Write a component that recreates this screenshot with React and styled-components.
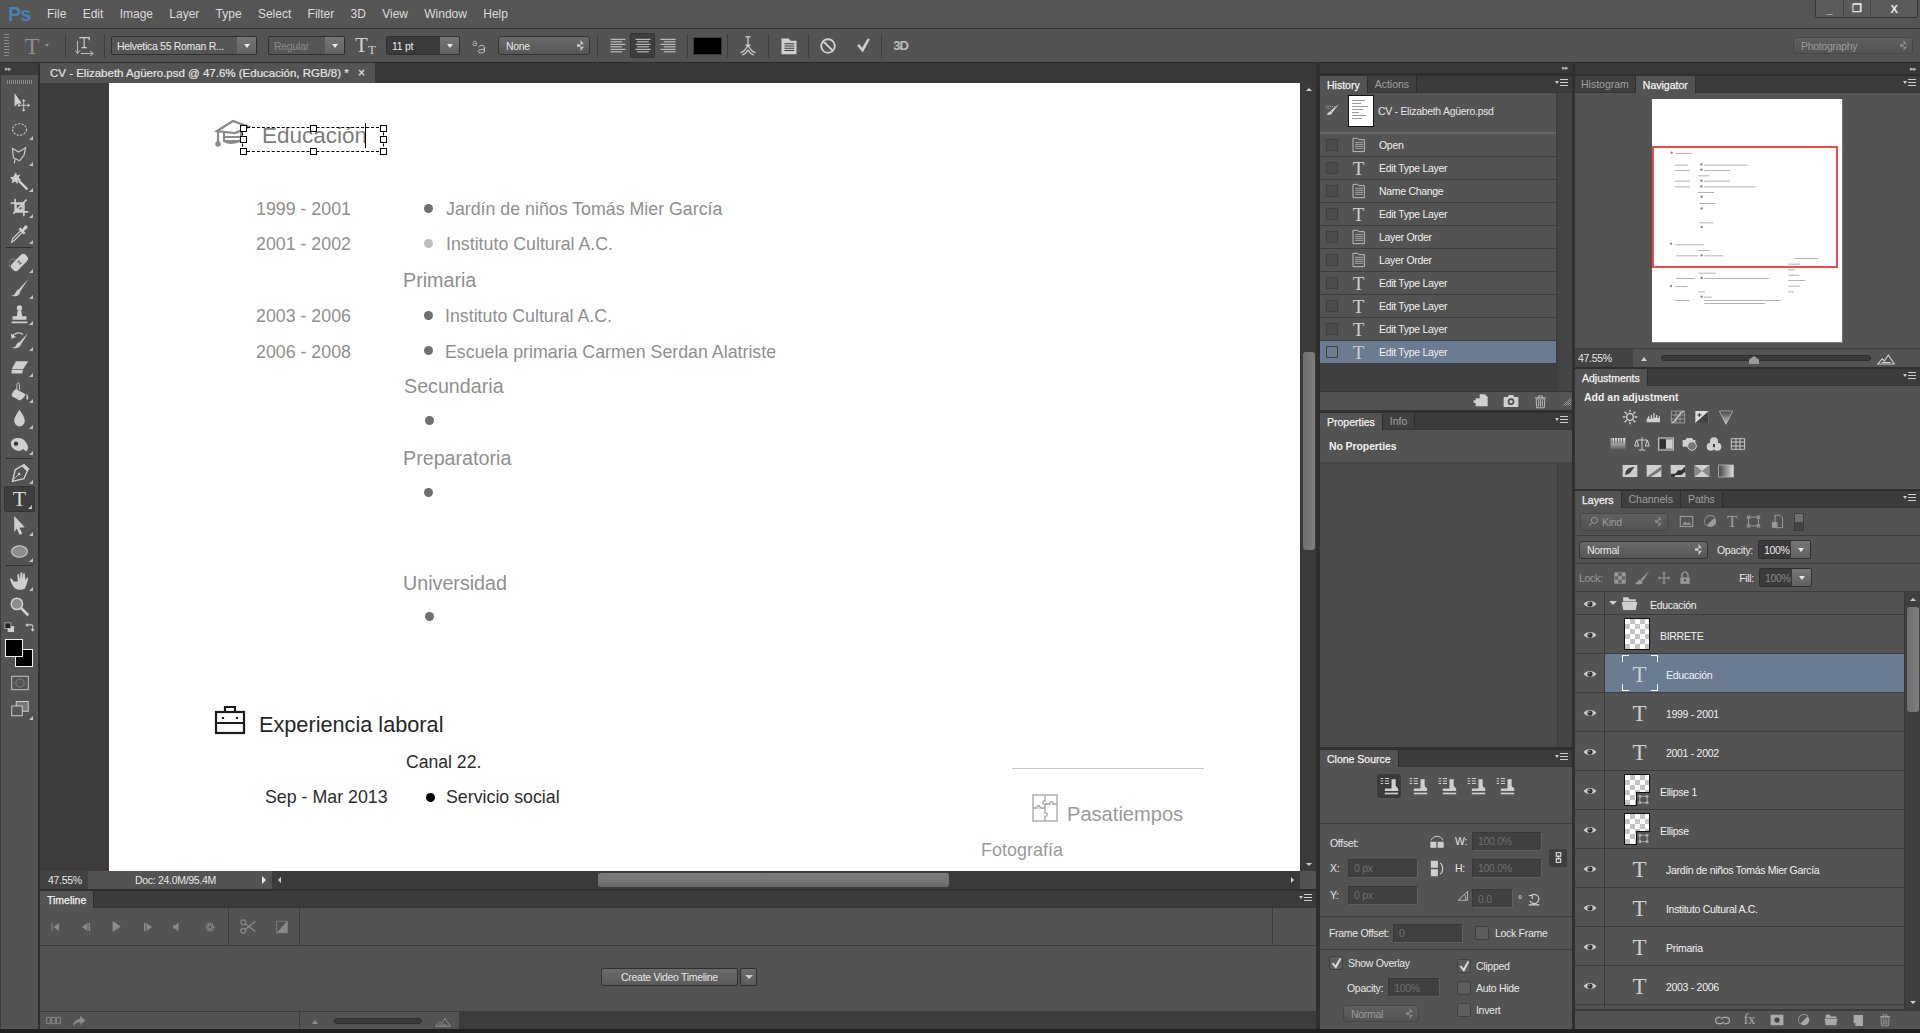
import React from "react";
import styled, { createGlobalStyle, css } from "styled-components";

const GlobalStyle = createGlobalStyle`
  html, body {
    margin: 0;
    height: 100%;
    overflow: hidden;
    background: #1d1d1f;
  }
  * { box-sizing: border-box; }
  body {
    font-family: "Liberation Sans", Arial, sans-serif;
    font-size: 10.5px;
    letter-spacing: -0.3px;
    color: #e6e6e6;
  }
`;

/* ---------- icons ---------- */

const shapes = {
  move: (<><path d="M6 1v15l3.4-3.2 4.6-.3z" /><path d="M16 9v11M10.5 14.500h11" stroke="currentColor" fill="none" /><path d="M16 7.500l2 2.500h-4zM16 21.500l2-2.500h-4zM9 14.500l2.500-2v4zM23 14.500l-2.500-2v4z" /></>),
  marquee: <ellipse cx="12" cy="12" rx="8" ry="6.500" fill="none" stroke="currentColor" strokeWidth="1.200" strokeDasharray="2.500 1.500" />,
  lasso: <path d="M4 4l7 4 8-5-2 9-5 6-7-3.500zM7 16l-1 5" fill="none" stroke="currentColor" strokeWidth="1.300" />,
  wand: (<><path d="M11 11l10 10" stroke="currentColor" strokeWidth="2.600" /><path d="M8 1l1 4 4-1-2 4 3 2-4 1v4l-3-3-4 2 1-4-3-3 4-.5z" /></>),
  crop: <path d="M7 2v15h15M2 7h15v15M20 3L5 19M8 8h7v7H8z" fill="none" stroke="currentColor" strokeWidth="1.800" />,
  dropper: (<><path d="M3 22l1-4L14 8l2 2L6 20z" fill="none" stroke="currentColor" strokeWidth="1.300" /><path d="M13 5l2 2 3-4c2-1.500 4 .5 3 3l-4 3 2 2-2 2-6-6z" /></>),
  heal: (<><rect x="7" y="1" width="10" height="22" rx="4" transform="rotate(45 12 12)" /><circle cx="5" cy="13" r="5" fill="none" stroke="currentColor" strokeDasharray="1 1" /><path d="M10 12l2-2M12 14l2-2" stroke="#555" strokeWidth="1.500" /></>),
  brush: (<><path d="M22 1L11 13l2 2z" /><path d="M11 13c-3 .5-3 4-5 6-1 1-3 1-4 1 4 2 10 1 11-5z" /></>),
  stamp: (<><circle cx="12" cy="4.500" r="3" /><path d="M10 7h4l1 7h5v4H4v-4h5z" /><rect x="3" y="20" width="18" height="2" /></>),
  historyBrush: (<><path d="M3 8c3-5 9-6 13-3" fill="none" stroke="currentColor" strokeWidth="1.500" /><path d="M2 4l1 6 5-2zM22 3L12 14l2 2z" /><path d="M12 14c-3 0-3 3-5 5-1 1-3 1-4 1 4 2 9 1 11-4z" /></>),
  eraser: <path d="M8 6h14l-6 9H3zM3 16h13l-1 4H3z" />,
  bucket: (<><path d="M8 8l11 6c-1 3-4 6-7 7L3 16c0-3 2-6 5-8z" /><path d="M9 9V3c0-2.500 3-2.500 3 0v6" fill="none" stroke="currentColor" /><path d="M20 13c2 2 2 4 2 6-1 2-3 1-2-1z" /></>),
  drop: <path d="M12 2c3 5 6 8 6 13a6 6 0 0 1-12 0c0-5 3-8 6-13z" />,
  smudge: (<><path d="M2 10c1-5 9-7 14-4 3 2 5 5 6 10l-2 4-4-3-3 2c-4 1-11-2-11-9z" /><circle cx="8" cy="11" r="2.500" fill="#3a3a3a" /></>),
  pen: (<><path d="M15 3l6 6-4 9-13 3 3-13z" fill="none" stroke="currentColor" strokeWidth="1.500" /><path d="M17 1l6 6-2 2-6-6zM5 19l6-6" stroke="currentColor" /><circle cx="11.500" cy="12.500" r="1.500" /></>),
  pathSel: <path d="M6 1l12 13-6 .5 3 7-3 1-3-7-3 4z" />,
  ellipse: <ellipse cx="12" cy="12" rx="9" ry="6.500" fill="#8c8c8c" stroke="currentColor" strokeWidth="1.200" />,
  hand: <path d="M5 13c-1-3-3-4-4-3 1 3 3 9 6 11 3 2 9 2 11 0 2-3 3-8 4-12-1-1-2 0-3 3l-1-8c-1-1-2 0-2 1v6l-1-8c-1-1-2 0-2 1l-.500 7-1-6c-1-1-2 0-2 1l.500 7z" />,
  zoom: (<><circle cx="9" cy="9" r="6.500" fill="#8c8c8c" stroke="currentColor" strokeWidth="1.800" /><path d="M14 14l8 8" stroke="currentColor" strokeWidth="3" /></>),
  quick: (<><rect x="1" y="3" width="22" height="18" fill="none" stroke="currentColor" strokeWidth="1.200" /><circle cx="12" cy="12" r="5.500" fill="none" stroke="currentColor" strokeDasharray="1.200 1.200" /></>),
  screens: (<><rect x="7" y="2" width="16" height="13" fill="#777" stroke="currentColor" strokeWidth="1.300" /><rect x="1" y="8" width="14" height="13" fill="#555" stroke="currentColor" strokeWidth="1.300" /></>),
  defaults: (<><rect x="8" y="9" width="14" height="13" /><rect x="2" y="2" width="13" height="12" fill="#222" stroke="currentColor" strokeWidth="1.500" /></>),
  swap: (<><path d="M3 7l5-5v3h8c3 0 4 2 4 4v6h3l-4 6-4-6h3V9c0-1-.500-1.500-2-1.500H8V11z" /></>),
  orient: (<><path d="M5 2h12v3M11 2v12M8 14h6" fill="none" stroke="currentColor" strokeWidth="1.400" /><path d="M3 6v14M0 17l3 4 3-4M7 21h14M18 18l4 3-4 3" fill="none" stroke="currentColor" /></>),
  aa: (<><path d="M3 7c0-3 5-3 5 0v4c-2 1-5 1-5-1s3-2 5-2" fill="none" stroke="currentColor" /><path d="M12 14c0-4 8-4 8 0v7c-3 2-9 2-9-1 0-3 6-3 9-3" fill="none" stroke="currentColor" strokeWidth="1.500" /></>),
  alignL: <path d="M3 4h18M3 7h14M3 10h18M3 13h14M3 16h18M3 19h14" stroke="currentColor" strokeWidth="1.200" fill="none" />,
  alignC: <path d="M3 4h18M5 7h14M3 10h18M5 13h14M3 16h18M5 19h14" stroke="currentColor" strokeWidth="1.200" fill="none" />,
  alignR: <path d="M3 4h18M7 7h14M3 10h18M7 13h14M3 16h18M7 19h14" stroke="currentColor" strokeWidth="1.200" fill="none" />,
  warp: <path d="M9 1h6M12 1v10M9 11h6M3 20c3-1 6-3 9-9 3 6 6 8 9 9M5 23c3-1 5-3 7-6 2 3 4 5 7 6" fill="none" stroke="currentColor" strokeWidth="1.500" />,
  panels: (<><path d="M2 2h10l2 3h8v18H2z" /><path d="M6 9h13M6 12h13M6 15h13M6 18h13" stroke="#333" strokeWidth="1.300" /></>),
  cancel: <path d="M12 3a9 9 0 1 0 .01 0zM6 6l12 12" fill="none" stroke="currentColor" strokeWidth="2.400" />,
  check: <path d="M3 12l3-2 4 5L18 2l3 1-10 19z" />,
  doc: (<><path d="M3 2h7l2 2h8v18H3z" fill="none" stroke="currentColor" strokeWidth="1.300" /><path d="M6 8h12M6 11h12M6 14h12M6 17h12" stroke="currentColor" /></>),
  snapshotBrush: (<><path d="M22 2L9 12l3 3z" /><path d="M9 13c-3 0-3 3-7 5 4 2 9 1 10-3z" /><path d="M2 5l14 1M2 8l6 1" stroke="currentColor" strokeDasharray="2 1" /></>),
  fromState: <path d="M10 2h8l4 4v14H4v-5H1v-4h3V8h6z" />,
  camera: (<><path d="M1 6h6l2-3h6l2 3h6v15H1z" /><circle cx="12" cy="13" r="5" fill="#535353" /><circle cx="12" cy="13" r="2.500" /></>),
  trash: <path d="M3 6h18M9 6V3h6v3M5 8h14l-1 14H6zM9 10v10M12 10v10M15 10v10" fill="none" stroke="currentColor" strokeWidth="1.300" />,
  sun: (<><circle cx="12" cy="12" r="5" fill="none" stroke="currentColor" strokeWidth="2" /><path d="M12 1v4M12 19v4M1 12h4M19 12h4M4 4l3 3M17 17l3 3M20 4l-3 3M7 17l-3 3" stroke="currentColor" strokeWidth="2" /></>),
  levels: <path d="M1 20V14h2v-3h2v4h2V9h2v5h2V6h2v7h2V9h2v5h2v-3h2v9z" />,
  curves: (<><path d="M2 3h20v18H2z M9 3v18M15 3v18M2 9h20M2 15h20" fill="none" stroke="currentColor" strokeWidth=".800" /><path d="M3 20c7 0 10-16 18-16" fill="none" stroke="currentColor" strokeWidth="2" /></>),
  exposure: (<><rect x="2" y="3" width="20" height="18" fill="#ddd" /><path d="M22 3v18H2z" fill="#444" /><path d="M5 9h6M8 6v6M14 16h6" stroke="#333" strokeWidth="1.500" /></>),
  vibrance: (<><defs><linearGradient id="gv" x1="0" y1="0" x2="0" y2="1"><stop offset="0" stopColor="#444" /><stop offset="1" stopColor="#ccc" /></linearGradient></defs><path d="M2 3h20L12 23z" fill="url(#gv)" stroke="#ccc" /></>),
  hue: (<><defs><linearGradient id="gh" x1="0" y1="0" x2="0" y2="1"><stop offset="0" stopColor="#eee" /><stop offset="1" stopColor="#555" /></linearGradient></defs><rect x="1" y="3" width="22" height="18" fill="url(#gh)" /><path d="M3 3v8M7 3v8M11 3v8M15 3v8M19 3v8" stroke="#555" strokeWidth="1.500" /></>),
  balance: <path d="M12 2v18M7 21h10M4 6h16M4 6L1 15h6zM20 6l-3 9h6z" fill="none" stroke="currentColor" strokeWidth="1.500" />,
  bw: (<><rect x="1" y="3" width="22" height="18" fill="none" stroke="currentColor" strokeWidth="1.500" /><rect x="3" y="5" width="9" height="14" fill="#333" /><rect x="12" y="5" width="10" height="14" /></>),
  photoFilter: (<><path d="M1 6h4l2-3h8l2 3h3v10H1z" /><circle cx="15" cy="15" r="6.500" fill="#777" stroke="currentColor" strokeWidth="1.500" /></>),
  mixer: (<><circle cx="12" cy="8" r="6" /><circle cx="7" cy="16" r="6" /><circle cx="17" cy="16" r="6" /><path d="M12 12v5" stroke="#444" strokeWidth="3" /></>),
  lookup: <path d="M2 4h20v16H2zM9 4v16M15 4v16M2 9h20M2 15h20" fill="none" stroke="currentColor" strokeWidth="1.400" />,
  invert: (<><rect x="1" y="3" width="22" height="18" /><path d="M5 18c-1-8 6-12 14-12-4 3-5 11-14 12z" fill="#444" /></>),
  posterize: (<><rect x="1" y="3" width="22" height="18" /><path d="M1 21L23 5v6L7 21z" fill="#777" /></>),
  threshold: (<><rect x="1" y="3" width="22" height="18" /><path d="M1 16h7l4-5h5l6-6v8l-6 5H9l-3 3H1z" fill="#333" /></>),
  selective: (<><rect x="1" y="3" width="22" height="18" /><path d="M1 3l11 9L1 21zM23 3l-11 9 11 9z" fill="#888" /></>),
  gradientMap: (<><defs><linearGradient id="gg"><stop offset="0" stopColor="#444" /><stop offset="1" stopColor="#ddd" /></linearGradient></defs><rect x="1" y="3" width="22" height="18" fill="url(#gg)" stroke="#ccc" /></>),
  search: <path d="M14 3a6.500 6.500 0 1 0 .01 0zM9 14l-6 7" fill="none" stroke="currentColor" strokeWidth="2" />,
  fImage: (<><rect x="2" y="4" width="20" height="16" fill="none" stroke="currentColor" strokeWidth="1.800" /><path d="M5 17l5-5 3 3 3-2 4 4z" /></>),
  fAdjust: <path d="M12 3a9 9 0 1 0 .01 0zM5 19L19 5v-.5A9 9 0 0 0 5 19z" fillRule="evenodd" />,
  fShape: <path d="M4 5h16v14H4zM2 3h4v4H2zM18 3h4v4h-4zM2 17h4v4H2zM18 17h4v4h-4z" fill="none" stroke="currentColor" strokeWidth="1.500" />,
  fSmart: (<><path d="M8 2h8l4 4v16H8z" fill="none" stroke="currentColor" strokeWidth="1.600" /><rect x="3" y="13" width="9" height="9" /></>),
  checker: (<><rect x="3" y="3" width="18" height="18" fill="#666" stroke="currentColor" /><path d="M3 3h6v6H3zM15 3h6v6h-6zM9 9h6v6H9zM3 15h6v6H3zM15 15h6v6h-6z" /></>),
  lockBrush: <path d="M23 1L10 14l3 3zM9 14c-2 .5-2 4-8 6 5 3 12 2 12-2z" />,
  lockMove: <path d="M12 1l3 4h-2v6h6V9l4 3-4 3v-2h-6v6h2l-3 4-3-4h2v-6H5v2l-4-3 4-3v2h6V5H9z" />,
  lock: (<><path d="M7 11V7a5 5 0 0 1 10 0v4" fill="none" stroke="currentColor" strokeWidth="2.200" /><path d="M4 11h16v11H4z" /><circle cx="12" cy="16" r="2" fill="#535353" /></>),
  eye: (<><path d="M1 12c5-7 17-7 22 0-5 7-17 7-22 0z" /><circle cx="12" cy="12" r="4.500" fill="#333" /><circle cx="10.500" cy="10.500" r="1.200" fill="#ccc" /></>),
  folder: (<><path d="M3 6V3h7l2 3h9v3H3z" /><path d="M1 10h22l-2 11H3z" /></>),
  link: <path d="M9 7H6a5 5 0 0 0 0 10h4a5 5 0 0 0 4-3M15 17h3a5 5 0 0 0 0-10h-4a5 5 0 0 0-4 3" fill="none" stroke="currentColor" strokeWidth="2" />,
  mask: (<><rect x="1" y="3" width="22" height="18" /><circle cx="12" cy="12" r="4.500" fill="#444" /></>),
  newLayer: <path d="M5 2h17v20H8v-7l-3 3zM3 12h6v6z" />,
  cloneSrc: (<><path d="M2 3h3M2 6h3M2 9h3M7 3h5M7 6h5M7 9h5" stroke="currentColor" strokeWidth="1.200" /><path d="M15 4h5v8l3 3v3H7v-3h8z" /><path d="M7 20h16v2H7z" /></>),
  angle: <path d="M2 21L18 6v15zM13 11c2 2 2 6 2 10" fill="none" stroke="currentColor" strokeWidth="1.300" />,
  flipH: (<><path d="M2 13h9v9H2zM13 13h9v9h-9z" /><path d="M3 11c3-8 15-8 18 0" fill="none" stroke="currentColor" strokeWidth="1.500" /></>),
  flipV: (<><path d="M4 1h10v10H4zM4 13h10v10H4z" /><path d="M17 4c5 3 5 13 0 16" fill="none" stroke="currentColor" strokeWidth="1.500" /></>),
  reset: <path d="M7 6a8 8 0 1 1-2 9M3 6h6v6M3 22h18" fill="none" stroke="currentColor" strokeWidth="2" />,
  chain: <path d="M8 3h8v7H8zM8 14h8v7H8zM12 8v8" fill="none" stroke="currentColor" strokeWidth="2.400" />,
  first: <path d="M5 4h2v16H5zM20 4v16L9 12z" />,
  prev: <path d="M15 4v16L4 12zM17 4h3v16h-3z" />,
  play: <path d="M5 2v20l15-10z" />,
  next: <path d="M4 4h3v16H4zM9 4v16l11-8z" />,
  mute: <path d="M15 3v18l-7-6H4V9h4z" />,
  gear: (<><circle cx="12" cy="12" r="7" fill="none" stroke="currentColor" strokeWidth="3.500" strokeDasharray="3 1.500" /><circle cx="12" cy="12" r="4" fill="none" stroke="currentColor" strokeWidth="2" /></>),
  scissors: (<><circle cx="6" cy="6" r="3.500" fill="none" stroke="currentColor" strokeWidth="1.800" /><circle cx="6" cy="18" r="3.500" fill="none" stroke="currentColor" strokeWidth="1.800" /><path d="M9 8l14 11M9 16L23 5" stroke="currentColor" strokeWidth="1.800" /></>),
  transition: (<><rect x="3" y="2" width="18" height="20" fill="none" stroke="currentColor" strokeWidth="1.200" /><path d="M21 2v20H3z" /></>),
  frames: <path d="M1 7h6v10H1zM9 7h6v10H9zM17 7h6v10h-6z" fill="none" stroke="currentColor" strokeWidth="1.500" />,
  share: <path d="M14 3l9 8-9 8v-5c-5 0-9 2-12 7 0-7 5-12 12-13z" />,
  mountainS: <path d="M6 18l6-8 6 8z" />,
  mountainL: <path d="M1 20l6-7 3 3 5-8 8 12zM6 18h12" fill="none" stroke="currentColor" strokeWidth="1.500" />,
};

const Glyph = styled.svg.attrs({ viewBox: "0 0 24 24" })`
  width: ${(p) => p.$size || 16}px;
  height: ${(p) => p.$size || 16}px;
  flex: none;
  fill: currentColor;
  color: ${(p) => p.$color || "#cfcfcf"};
  display: block;
`;

const Icon = ({ name, size, color }) => (
  <Glyph $size={size} $color={color}>
    {shapes[name]}
  </Glyph>
);

/* ---------- shared bits ---------- */

const Frame = styled.div`
  width: 1920px;
  height: 1033px;
  display: flex;
  flex-direction: column;
  background: #535353;
  overflow: hidden;
`;

const SelectShell = styled.div`
  display: flex;
  align-items: center;
  height: ${(p) => p.$h || 18}px;
  width: ${(p) => p.$w}px;
  flex: none;
  border: 1px solid #333;
  border-radius: 3px;
  padding: 0 5px 0 7px;
  background: linear-gradient(#6a6a6a, #565656);
  color: ${(p) => (p.$off ? "#9a9a9a" : "#e8e8e8")};
  ${(p) =>
    p.$ghost &&
    css`
      border-color: #474747;
      background: linear-gradient(#5f5f5f, #535353);
    `}
`;

const Updown = styled.span`
  margin-left: auto;
  width: 7px;
  height: 11px;
  background: currentColor;
  opacity: 0.8;
  clip-path: polygon(50% 0, 100% 38%, 0 38%, 0 62%, 100% 62%, 50% 100%);
`;

const Select = ({ w, h, off, ghost, children }) => (
  <SelectShell $w={w} $h={h} $off={off} $ghost={ghost}>
    {children}
    <Updown />
  </SelectShell>
);

const Combo = styled.div`
  display: flex;
  width: ${(p) => p.$w}px;
  height: ${(p) => p.$h || 19}px;
  flex: none;
  border: 1px solid #2f2f2f;
  border-radius: 2px;
  overflow: hidden;
`;

const ComboText = styled.div`
  flex: 1;
  display: flex;
  align-items: center;
  padding-left: ${(p) => p.$pad || 5}px;
  background: ${(p) => (p.$light ? "#555" : "#3a3a3a")};
  color: ${(p) => (p.$off ? "#8a8a8a" : "#eaeaea")};
`;

const ComboArrow = styled.div`
  width: ${(p) => p.$w || 19}px;
  display: flex;
  align-items: center;
  justify-content: center;
  background: linear-gradient(#767676, #616161);
  &::after {
    content: "";
    border: 3.500px solid transparent;
    border-top: 4px solid #e8e8e8;
    border-bottom: 0;
  }
`;

const Field = styled.div`
  display: flex;
  align-items: center;
  height: ${(p) => p.$h || 19}px;
  width: ${(p) => p.$w || 70}px;
  padding-left: 5px;
  background: #404040;
  border: 1px solid #383838;
  border-bottom-color: #5f5f5f;
  border-right-color: #5f5f5f;
  color: #707070;
`;

const Check = styled.span`
  width: 14px;
  height: 14px;
  flex: none;
  display: flex;
  align-items: center;
  justify-content: center;
  background: #5c5c5c;
  border: 1px solid #3f3f3f;
  border-radius: 2px;
`;

const Panel = styled.section`
  display: flex;
  flex-direction: column;
  height: ${(p) => p.$h}px;
  flex: none;
  background: #535353;
  overflow: hidden;
`;

const TabStrip = styled.div`
  display: flex;
  height: 18px;
  flex: none;
  background: #3b3b3b;
  border-top: 1px solid #2e2e2e;
  border-bottom: 1px solid #353535;
`;

const Tab = styled.div`
  display: flex;
  align-items: center;
  padding: 0 ${(p) => p.$pad || 7}px;
  height: ${(p) => (p.$on ? "17px" : "16px")};
  letter-spacing: 0;
  background: ${(p) => (p.$on ? "#535353" : "#3f3f3f")};
  color: ${(p) => (p.$on ? "#f2f2f2" : "#a0a0a0")};
  -webkit-text-stroke: ${(p) => (p.$on ? "0.25px #f2f2f2" : "0")};
  border-right: 1px solid #2e2e2e;
  z-index: 1;
`;

const MenuLines = styled.div`
  margin-left: auto;
  margin: 3px 4px 0 auto;
  width: 13px;
  height: 9px;
  position: relative;
  background: repeating-linear-gradient(#ccc 0 1px, transparent 1px 3px) right / 8px 100% no-repeat;
  &::before {
    content: "";
    position: absolute;
    left: 0;
    top: 2px;
    border: 2.500px solid transparent;
    border-top: 3px solid #ccc;
  }
`;

const Collapse = styled.div`
  height: ${(p) => p.$h || 12}px;
  flex: none;
  display: flex;
  align-items: center;
  justify-content: ${(p) => (p.$left ? "flex-start" : "flex-end")};
  padding: 0 4px;
  background: ${(p) => (p.$left ? "#3c3c3c" : "#383838")};
  color: #b5b5b5;
  font-size: 7px;
  letter-spacing: -1px;
`;

const CornerGrip = styled.span`
  width: 9px;
  height: 9px;
  flex: none;
  background: repeating-conic-gradient(#9a9a9a 0 25%, transparent 0 50%) 0 0 / 2px 2px;
  clip-path: polygon(100% 0, 100% 100%, 0 100%);
`;

const Grow = styled.div`
  flex: 1;
`;

const T = styled.span`
  font-family: "Liberation Serif", serif;
  font-size: ${(p) => p.$size || 20}px;
  line-height: 1;
  letter-spacing: 0;
  color: ${(p) => p.$color || "#cfcfcf"};
  flex: none;
`;

/* ---------- title and options bar ---------- */

const TitleBar = styled.header`
  height: 29px;
  flex: none;
  display: flex;
  align-items: flex-start;
  background: #555;
  border-bottom: 1px solid #2d2d2d;
  padding-left: 8px;
`;

const PsLogo = styled.div`
  width: 39px;
  font-size: 19.500px;
  line-height: 28px;
  font-weight: 700;
  color: #4a82b8;
  letter-spacing: -0.600px;
`;

const Menu = styled.nav`
  display: flex;
  gap: 16.300px;
  font-size: 12px;
  line-height: 28px;
  letter-spacing: 0;
  color: #dcdcdc;
`;

const WinButtons = styled.div`
  margin-left: auto;
  margin-right: 2px;
  display: flex;
  width: 103px;
  height: 18px;
  background: #5a5a5a;
  border: 1px solid #333;
  border-top: 0;
  border-radius: 0 0 2px 2px;
`;

const WinButton = styled.div`
  width: ${(p) => p.$w}px;
  display: flex;
  align-items: center;
  justify-content: center;
  font-size: 11px;
  font-weight: 700;
  color: #eee;
  border-right: ${(p) => (p.$last ? 0 : "1px solid #444")};
`;

const OptionsBar = styled.div`
  height: 34px;
  flex: none;
  display: flex;
  align-items: center;
  background: #535353;
  border-bottom: 1px solid #2d2d2d;
  padding: 0 7px 0 4px;
`;

const Grip = styled.div`
  width: ${(p) => p.$w || 5}px;
  height: ${(p) => p.$h || 24}px;
  flex: none;
  background: repeating-linear-gradient(#8a8a8a 0 1px, transparent 1px 3px);
`;

const Slot = styled.div`
  width: ${(p) => p.$w}px;
  height: 25px;
  flex: none;
  display: flex;
  align-items: center;
  justify-content: center;
  gap: ${(p) => p.$gap ?? 6}px;
  border-radius: 2px;
  ${(p) =>
    p.$on &&
    css`
      background: #3e3e3e;
      border: 1px solid #343434;
    `}
`;

const SizeGlyph = styled.div`
  display: flex;
  align-items: flex-end;
`;

const Sep = styled.div`
  width: 1px;
  height: 24px;
  flex: none;
  background: #3e3e3e;
  margin: 0 ${(p) => p.$r || 0}px 0 ${(p) => p.$l || 0}px;
`;

const MiniArrow = styled.span`
  border: 2.500px solid transparent;
  border-top: 3px solid #8d8d8d;
  border-bottom: 0;
`;

const Swatch = styled.div`
  width: 29px;
  height: 18px;
  flex: none;
  background: #000;
  border: 1px solid #3a3a3a;
`;

const ThreeD = styled.span`
  font-size: 13px;
  font-weight: 700;
  color: #bdbdbd;
  letter-spacing: -1px;
`;

/* ---------- tools ---------- */

const Workspace = styled.div`
  flex: 1;
  min-height: 0;
  display: flex;
`;

const Toolbox = styled.aside`
  width: 40px;
  flex: none;
  display: flex;
  flex-direction: column;
  background: #535353;
  border-left: 1px solid #3a3a3a;
  border-right: 2px solid #2f2f2f;
`;

const ToolGrip = styled.div`
  height: 10px;
  margin: 2px 6px 3px;
  flex: none;
  background: repeating-linear-gradient(90deg, #8a8a8a 0 1px, transparent 1px 2px) center / 100% 4px no-repeat;
`;

const Tool = styled.div`
  height: 26px;
  flex: none;
  margin: 0 3px 0 3px;
  display: flex;
  align-items: center;
  justify-content: center;
  position: relative;
  border-radius: 2px;
  ${(p) =>
    p.$on &&
    css`
      background: #3e3e3e;
      border: 1px solid #343434;
    `}
  ${(p) =>
    p.$more &&
    css`
      &::after {
        content: "";
        position: absolute;
        right: 2px;
        bottom: 2px;
        border: 2px solid transparent;
        border-right-color: #c2c2c2;
        border-bottom-color: #c2c2c2;
      }
    `}
`;

const ToolRule = styled.div`
  height: 1px;
  flex: none;
  margin: 1px 5px 1px;
  background: #303030;
`;

const SwapRow = styled.div`
  height: 14px;
  flex: none;
  margin: 1px 3px 5px 3px;
  display: flex;
  align-items: center;
  justify-content: space-between;
`;

const ColorWell = styled.div`
  height: 30px;
  flex: none;
  position: relative;
  margin: 0 0 1px 4px;
`;

const Chip = styled.div`
  position: absolute;
  width: 18px;
  height: 18px;
  left: ${(p) => (p.$back ? 10 : 0)}px;
  top: ${(p) => (p.$back ? 10 : 0)}px;
  background: #000;
  border: 1px solid #eee;
`;

const toolColumn = [
  ["move"], ["marquee", 1], ["lasso", 1], ["wand", 1], ["crop", 1], ["dropper", 1], "-",
  ["heal", 1], ["brush", 1], ["stamp", 1], ["historyBrush", 1], ["eraser", 1], ["bucket", 1], ["drop", 1], ["smudge", 1], "-",
  ["pen", 1], ["type", 1], ["pathSel", 1], ["ellipse", 1], "-",
  ["hand", 1], ["zoom"],
];

const ToolColumn = () => (
  <Toolbox>
    <Collapse $left>▸▸</Collapse>
    <ToolGrip />
    {toolColumn.map((t, i) =>
      t === "-" ? (
        <ToolRule key={i} />
      ) : t[0] === "type" ? (
        <Tool key={i} $on $more>
          <T $size={22} $color="#dcdcdc">T</T>
        </Tool>
      ) : (
        <Tool key={i} $more={t[1]}>
          <Icon name={t[0]} size={t[0] === "move" ? 22 : 21} />
        </Tool>
      )
    )}
    <SwapRow>
      <Icon name="defaults" size={11} />
      <Icon name="swap" size={11} />
    </SwapRow>
    <ColorWell>
      <Chip $back />
      <Chip />
    </ColorWell>
    <Tool>
      <Icon name="quick" size={18} />
    </Tool>
    <Tool $more>
      <Icon name="screens" size={18} />
    </Tool>
  </Toolbox>
);

/* ---------- document ---------- */

const Center = styled.main`
  width: 1276px;
  flex: none;
  display: flex;
  flex-direction: column;
`;

const DocTabs = styled.div`
  height: 20px;
  flex: none;
  display: flex;
  background: #383838;
`;

const DocTab = styled.div`
  width: 335px;
  display: flex;
  align-items: center;
  padding-left: 10px;
  background: #535353;
  font-size: 11.500px;
  letter-spacing: 0;
  -webkit-text-stroke: 0.2px #e4e4e4;
  color: #e4e4e4;
  white-space: nowrap;
`;

const DocClose = styled.span`
  margin-left: auto;
  margin-right: 10px;
  font-size: 12px;
`;

const CanvasRow = styled.div`
  height: 788px;
  flex: none;
  display: flex;
  background: #3d3c3b;
  padding-left: 69px;
`;

const Page = styled.div`
  width: 1191px;
  flex: none;
  position: relative;
  background: #fff;
  overflow: hidden;
`;

const placed = css`
  position: absolute;
  left: ${(p) => p.$x - 109}px;
  top: ${(p) => p.$y - 83}px;
`;

const DocText = styled.div`
  ${placed}
  transform: translateY(calc(-50% + 1px));
  white-space: nowrap;
  font-size: ${(p) => p.$size || 17.800}px;
  line-height: 1.2;
  letter-spacing: 0;
  color: ${(p) => p.$color || "#8f8f8f"};
  font-family: "Liberation Sans", Arial, sans-serif;
`;

const Dot = styled.div`
  ${placed}
  width: 9px;
  height: 9px;
  margin: -4.500px 0 0 -4.500px;
  border-radius: 50%;
  background: ${(p) => p.$color || "#6f6f6f"};
`;

const DocGraphic = styled.svg`
  ${placed}
  width: ${(p) => p.$w}px;
  height: ${(p) => p.$h}px;
`;

const Rule = styled.div`
  ${placed}
  width: 192px;
  height: 1px;
  background: #c9c9c9;
`;

const TextBox = styled.div`
  ${placed}
  width: 142px;
  height: 25px;
  border: 1px dashed #000;
`;

const Handle = styled.span`
  position: absolute;
  left: ${(p) => p.$l}%;
  top: ${(p) => p.$t}%;
  width: 7px;
  height: 7px;
  margin: -3.500px 0 0 -3.500px;
  background: #fff;
  border: 1px solid #000;
`;

const Caret = styled.div`
  ${placed}
  width: 1px;
  height: 25px;
  background: #000;
`;

const handleSpots = [
  [0, 0], [50, 0], [100, 0], [0, 50], [100, 50], [0, 100], [50, 100], [100, 100],
];

const grayRows = [
  ["1999 - 2001", 256, 209],
  ["2001 - 2002", 256, 244],
  ["2003 - 2006", 256, 316],
  ["2006 - 2008", 256, 352],
  ["Jardín de niños Tomás Mier García", 446, 209],
  ["Instituto Cultural A.C.", 446, 244],
  ["Instituto Cultural A.C.", 445, 316],
  ["Escuela primaria Carmen Serdan Alatriste", 445, 352],
  ["Primaria", 403, 280, 19.700],
  ["Secundaria", 404, 386, 19.700],
  ["Preparatoria", 403, 458, 19.700],
  ["Universidad", 403, 583, 19.700],
];

const DocPage = () => (
  <Page>
    <DocGraphic $x={215} $y={119} $w={36} $h={28} viewBox="0 0 36 28" fill="none" stroke="#8a8a8a" strokeWidth="2.200">
      <path d="M2 12L18 2l16 6-14 6z" />
      <path d="M3 25V12" />
      <circle cx="3" cy="25" r="1.700" fill="#8a8a8a" />
      <path d="M9 13v9c5 3 13 2 17-1v-10M9 18h18M9 22h17" />
    </DocGraphic>
    <DocText $x={262} $y={134} $size={22.500} $color="#7d7d7d">Educación</DocText>
    <TextBox $x={242} $y={127}>
      {handleSpots.map(([l, t]) => (
        <Handle key={`${l}-${t}`} $l={l} $t={t} />
      ))}
    </TextBox>
    <Caret $x={365} $y={123} />
    {grayRows.map(([label, x, y, size]) => (
      <DocText key={`${label}-${y}`} $x={x} $y={y} $size={size}>{label}</DocText>
    ))}
    <Dot $x={428} $y={208} />
    <Dot $x={428} $y={243} $color="#bdbdbd" />
    <Dot $x={428} $y={315} />
    <Dot $x={428} $y={350} />
    <Dot $x={429} $y={420} />
    <Dot $x={428} $y={492} />
    <Dot $x={429} $y={616} />
    <DocGraphic $x={214} $y={705} $w={32} $h={30} viewBox="0 0 32 30" fill="none" stroke="#1c1c1c" strokeWidth="2.200">
      <rect x="2" y="7" width="28" height="21" />
      <path d="M11 7V2h10v5M2 18h28" />
      <path d="M9 12v2M23 12v2" />
    </DocGraphic>
    <DocText $x={259} $y={724} $size={21.700} $color="#262626">Experiencia laboral</DocText>
    <DocText $x={406} $y={762} $size={17.600} $color="#2c2c2c">Canal 22.</DocText>
    <DocText $x={265} $y={797} $color="#2c2c2c">Sep - Mar 2013</DocText>
    <Dot $x={430} $y={797} $color="#000" />
    <DocText $x={446} $y={797} $color="#2c2c2c">Servicio social</DocText>
    <Rule $x={1012} $y={768} />
    <DocGraphic $x={1032} $y={794} $w={26} $h={28} viewBox="0 0 26 28" fill="none" stroke="#a5a5a5" strokeWidth="1.300">
      <rect x="1" y="1" width="24" height="26" />
      <path d="M13 1v6c-3-1-3 4 0 3v4H8c1-3-4-3-3 0H1M13 14v5c3-1 3 4 0 3v5M13 10h5c-1-3 4-3 3 0h4" />
    </DocGraphic>
    <DocText $x={1067} $y={813} $size={20.100} $color="#9a9a9a">Pasatiempos</DocText>
    <DocText $x={981} $y={850} $size={18} $color="#9a9a9a">Fotografía</DocText>
  </Page>
);

const ScrollV = styled.div`
  width: 16px;
  flex: none;
  display: flex;
  flex-direction: column;
  align-items: center;
  background: #3a3a3a;
  border-left: 1px solid #333;
`;

const Triangle = styled.span`
  flex: none;
  width: 0;
  height: 0;
  margin: ${(p) => p.$m || "0"};
  border: ${(p) => p.$s || 3}px solid transparent;
  ${(p) => `border-${{ up: "bottom", down: "top", left: "right", right: "left" }[p.$dir]}-color: ${p.$color || "#d0d0d0"};`}
  ${(p) => `border-${{ up: "top", down: "bottom", left: "left", right: "right" }[p.$dir]}-width: 0;`}
`;

const Thumb = styled.div`
  width: ${(p) => p.$w || 12}px;
  height: ${(p) => p.$h}px;
  flex: none;
  margin-top: ${(p) => p.$mt || 0}px;
  margin-left: ${(p) => p.$ml || 0}px;
  border-radius: 3px;
  background: linear-gradient(90deg, #6e6e6e, #7e7e7e);
`;

const HThumb = styled(Thumb)`
  background: linear-gradient(#7e7e7e, #6a6a6a);
`;

const StatusBar = styled.div`
  height: 18px;
  flex: none;
  display: flex;
  background: #3a3a3a;
`;

const StatusZoom = styled.div`
  width: 48px;
  display: flex;
  align-items: center;
  padding-left: 8px;
  background: #424242;
`;

const StatusDoc = styled.div`
  width: 184px;
  display: flex;
  align-items: center;
  padding-left: 47px;
  background: #535353;
`;

const HTrack = styled.div`
  flex: 1;
  display: flex;
  align-items: center;
  padding: 0 6px 0 6px;
`;

const StatusEnd = styled.div`
  width: 16px;
  background: #535353;
`;

const Timeline = styled.section`
  flex: 1;
  display: flex;
  flex-direction: column;
  background: #535353;
  border-top: 1px solid #2c2c2c;
`;

const TransportRow = styled.div`
  height: 38px;
  flex: none;
  display: flex;
  align-items: stretch;
  border-bottom: 1px solid #3c3c3c;
`;

const Transport = styled.div`
  width: ${(p) => p.$w}px;
  flex: none;
  display: flex;
  align-items: center;
  justify-content: center;
  border-right: ${(p) => (p.$edge ? "1px solid #3c3c3c" : "0")};
`;

const TimelineBody = styled.div`
  flex: 1;
  display: flex;
  align-items: center;
  justify-content: center;
  padding: 0 0 4px 2px;
  gap: 2px;
`;

const PlainButton = styled.div`
  width: ${(p) => p.$w}px;
  height: 18px;
  display: flex;
  align-items: center;
  justify-content: center;
  border: 1px solid #2f2f2f;
  border-radius: 2px;
  background: linear-gradient(#6c6c6c, #5a5a5a);
  color: #e6e6e6;
`;

const TimelineFoot = styled.div`
  height: 18px;
  flex: none;
  display: flex;
  background: #3c3c3c;
  border-top: 1px solid #3a3a3a;
`;

const FootLeft = styled.div`
  width: 260px;
  display: flex;
  align-items: center;
  gap: 11px;
  padding-left: 6px;
  background: #535353;
  border-right: 1px solid #3c3c3c;
`;

const FootZoom = styled.div`
  width: 159px;
  display: flex;
  align-items: center;
  gap: 13px;
  padding-left: 9px;
  background: #535353;
`;

const Groove = styled.div`
  width: ${(p) => p.$w}px;
  height: 6px;
  border-radius: 3px;
  background: #3a3a3a;
  border: 1px solid #2e2e2e;
  flex: none;
`;

/* ---------- history dock ---------- */

const DockMiddle = styled.div`
  width: 257px;
  flex: none;
  display: flex;
  flex-direction: column;
  gap: 2px;
  padding: 0 1px 0 4px;
  background: #2f2f2f;
`;

const DockRight = styled.div`
  width: 347px;
  flex: none;
  display: flex;
  flex-direction: column;
  gap: 1px;
  padding-left: 2px;
  background: #2f2f2f;
`;

const HistoryList = styled.div`
  flex: 1;
  display: flex;
  min-height: 0;
`;

const HistoryBody = styled.div`
  width: 236px;
  flex: none;
  background: #3f3f3f;
`;

const PanelScroll = styled.div`
  flex: 1;
  background: #444;
  border-left: 1px solid #3a3a3a;
`;

const Snapshot = styled.div`
  height: 41px;
  display: flex;
  align-items: center;
  background: #535353;
  border-bottom: 2px solid #666;
  padding: 0 0 4px 5px;
`;

const SnapImage = styled.div`
  width: 26px;
  height: 32px;
  margin: 0 4px 0 8px;
  flex: none;
  background: #fff;
  border: 1px solid #111;
  padding: 4px 3px;
  display: flex;
  flex-direction: column;
  gap: 2px;
`;

const SnapLine = styled.i`
  display: block;
  height: 1px;
  width: ${(p) => p.$w}%;
  background: #9a9a9a;
`;

const HistoryRow = styled.div`
  height: 23px;
  display: flex;
  align-items: center;
  padding-left: 6px;
  background: ${(p) => (p.$on ? "#6a7b92" : "#535353")};
  border-bottom: 1px solid #3d3d3d;
  color: #f0f0f0;
`;

const HistoryCheck = styled(Check)`
  width: 12px;
  height: 12px;
  border-radius: 0;
  background: ${(p) => (p.$on ? "#6a7b92" : "#4c4c4c")};
`;

const HistoryGlyph = styled.div`
  width: 41px;
  display: flex;
  justify-content: center;
  flex: none;
`;

const PanelFoot = styled.div`
  height: 19px;
  flex: none;
  display: flex;
  align-items: center;
  justify-content: flex-end;
  gap: 14px;
  padding-right: 1px;
  background: #535353;
  border-top: 1px solid #343434;
`;

const PropsHead = styled.div`
  height: 34px;
  flex: none;
  display: flex;
  align-items: center;
  padding-left: 9px;
  font-weight: 700;
  letter-spacing: -0.1px;
  color: #f0f0f0;
  border-bottom: 2px solid #454545;
`;

const PropsBody = styled.div`
  flex: 1;
  display: flex;
  background: #4b4b4b;
`;

const PropsFill = styled.div`
  width: 237px;
  flex: none;
`;

const CloneIcons = styled.div`
  height: 57px;
  flex: none;
  display: flex;
  padding: 7px 0 0 57px;
  gap: 5px;
  border-bottom: 1px solid #3c3c3c;
`;

const CloneIcon = styled.div`
  width: 24px;
  height: 24px;
  display: flex;
  align-items: center;
  justify-content: center;
  border-radius: 3px;
  ${(p) =>
    p.$on &&
    css`
      background: #3a3a3a;
    `}
`;

const OffsetGrid = styled.div`
  height: 93px;
  flex: none;
  display: grid;
  grid-template-columns: 18px 70px 37px 17px 70px 7px 18px;
  grid-template-rows: 20px 20px 20px;
  row-gap: 7px;
  align-items: center;
  padding: 7px 0 0 10px;
  border-bottom: 1px solid #3c3c3c;
`;

const OffsetLabel = styled.div`
  grid-column: 1 / span 2;
  margin-top: 4px;
`;

const CellIcon = styled.div`
  display: flex;
  justify-content: center;
`;

const LinkButton = styled.div`
  grid-column: 7;
  grid-row: 1 / span 2;
  width: 18px;
  height: 18px;
  margin-top: 6px;
  display: flex;
  align-items: center;
  justify-content: center;
  background: #3e3e3e;
  border-radius: 2px;
`;

const AngleCell = styled.div`
  grid-column: 5 / span 3;
  display: flex;
  align-items: center;
  gap: 5px;
  margin-top: 7px;
`;

const FrameRow = styled.div`
  height: 33px;
  flex: none;
  display: flex;
  align-items: center;
  padding-left: 9px;
  border-bottom: 1px solid #3c3c3c;
`;

const FrameLabel = styled.span`
  width: 64px;
  flex: none;
`;

const CheckLabel = styled.label`
  display: flex;
  align-items: center;
  gap: ${(p) => p.$gap || 5}px;
  margin-left: ${(p) => p.$ml || 0}px;
`;

const OverlayArea = styled.div`
  flex: 1;
  display: flex;
  padding: 6px 0 0 9px;
`;

const OverlayLeft = styled.div`
  width: 128px;
  flex: none;
  display: flex;
  flex-direction: column;
  gap: 8px;
`;

const OverlayRow = styled.div`
  display: flex;
  align-items: center;
  gap: 5px;
  padding-left: ${(p) => p.$pad || 0}px;
`;

const OverlayRight = styled.div`
  display: flex;
  flex-direction: column;
  gap: 8px;
  padding-top: 3px;
`;

const Tick = () => <Icon name="check" size={13} color="#dadada" />;

const historyItems = [
  ["doc", "Open"], ["t", "Edit Type Layer"], ["doc", "Name Change"], ["t", "Edit Type Layer"],
  ["doc", "Layer Order"], ["doc", "Layer Order"], ["t", "Edit Type Layer"], ["t", "Edit Type Layer"],
  ["t", "Edit Type Layer"], ["t", "Edit Type Layer"],
];

const PanelMiddle = () => (
  <DockMiddle>
    <Collapse $h={10}>▸▸</Collapse>
    <Panel $h={335}>
      <TabStrip>
        <Tab $on>History</Tab>
        <Tab>Actions</Tab>
        <MenuLines />
      </TabStrip>
      <HistoryList>
        <HistoryBody>
          <Snapshot>
            <Icon name="snapshotBrush" size={15} />
            <SnapImage>
              {[70, 50, 90, 60, 40, 80, 55].map((w, i) => (
                <SnapLine key={i} $w={w} />
              ))}
            </SnapImage>
            CV - Elizabeth Agüero.psd
          </Snapshot>
          {historyItems.map(([icon, label], i) => (
            <HistoryRow key={i} $on={i === 9}>
              <HistoryCheck $on={i === 9} />
              <HistoryGlyph>
                {icon === "t" ? <T $size={19}>T</T> : <Icon name="doc" size={16} />}
              </HistoryGlyph>
              {label}
            </HistoryRow>
          ))}
        </HistoryBody>
        <PanelScroll />
      </HistoryList>
      <PanelFoot>
        <Icon name="fromState" size={16} />
        <Icon name="camera" size={16} />
        <Icon name="trash" size={15} />
        <CornerGrip />
      </PanelFoot>
    </Panel>
    <Panel $h={335}>
      <TabStrip>
        <Tab $on>Properties</Tab>
        <Tab>Info</Tab>
        <MenuLines />
      </TabStrip>
      <PropsHead>No Properties</PropsHead>
      <PropsBody>
        <PropsFill />
        <PanelScroll />
      </PropsBody>
    </Panel>
    <Panel $h={280}>
      <TabStrip>
        <Tab $on>Clone Source</Tab>
        <MenuLines />
      </TabStrip>
      <CloneIcons>
        {[0, 1, 2, 3, 4].map((i) => (
          <CloneIcon key={i} $on={i === 0}>
            <Icon name="cloneSrc" size={20} />
          </CloneIcon>
        ))}
      </CloneIcons>
      <OffsetGrid>
        <OffsetLabel>Offset:</OffsetLabel>
        <CellIcon><Icon name="flipH" size={16} /></CellIcon>
        <span>W:</span>
        <Field>100.0%</Field>
        <span />
        <LinkButton><Icon name="chain" size={13} /></LinkButton>
        <span>X:</span>
        <Field>0 px</Field>
        <CellIcon><Icon name="flipV" size={17} /></CellIcon>
        <span>H:</span>
        <Field>100.0%</Field>
        <span />
        <span>Y:</span>
        <Field>0 px</Field>
        <CellIcon />
        <CellIcon><Icon name="angle" size={14} /></CellIcon>
        <AngleCell>
          <Field $w={41}>0.0</Field>
          °
          <Icon name="reset" size={14} />
        </AngleCell>
      </OffsetGrid>
      <FrameRow>
        <FrameLabel>Frame Offset:</FrameLabel>
        <Field>0</Field>
        <CheckLabel $ml={12} $gap={6}><Check />Lock Frame</CheckLabel>
      </FrameRow>
      <OverlayArea>
        <OverlayLeft>
          <CheckLabel><Check><Tick /></Check>Show Overlay</CheckLabel>
          <OverlayRow $pad={18}>Opacity:<Field $w={52}>100%</Field></OverlayRow>
          <OverlayRow $pad={14}><Select w={76} h={17} off ghost>Normal</Select></OverlayRow>
        </OverlayLeft>
        <OverlayRight>
          <CheckLabel><Check><Tick /></Check>Clipped</CheckLabel>
          <CheckLabel><Check />Auto Hide</CheckLabel>
          <CheckLabel><Check />Invert</CheckLabel>
        </OverlayRight>
      </OverlayArea>
    </Panel>
  </DockMiddle>
);

/* ---------- navigator, adjustments, layers ---------- */

const NavArea = styled.div`
  height: 255px;
  flex: none;
  display: flex;
  justify-content: center;
  padding: 6px 0 0 0;
  background: #535353;
`;

const NavPreview = styled.div`
  width: 191px;
  height: 244px;
  position: relative;
  background: #fff;
  border-right: 1px solid #777;
  border-bottom: 1px solid #777;
  margin-left: -1px;
`;

const NavDrawing = styled.svg`
  display: block;
  width: 190px;
  height: 243px;
`;

const ViewBox = styled.div`
  position: absolute;
  left: 0;
  top: 47px;
  width: 186px;
  height: 122px;
  border: 2px solid #f04a4a;
`;

const NavZoomRow = styled.div`
  height: 19px;
  flex: none;
  display: flex;
  align-items: center;
  background: #535353;
  border-top: 1px solid #3c3c3c;
`;

const NavPct = styled.div`
  width: 58px;
  height: 100%;
  flex: none;
  display: flex;
  align-items: center;
  padding-left: 3px;
  margin-right: 5px;
  background: #434343;
`;

const SliderWrap = styled.div`
  width: 210px;
  margin: 0 6px 0 11px;
  position: relative;
  flex: none;
`;

const SliderMark = styled.span`
  position: absolute;
  left: 88px;
  top: 1px;
  width: 10px;
  height: 8px;
  background: #9a9a9a;
  clip-path: polygon(50% 0, 100% 45%, 100% 100%, 0 100%, 0 45%);
`;

const NavCorner = styled.div`
  margin: auto 2px 1px auto;
`;

const AdjustTitle = styled.div`
  font-weight: 700;
  letter-spacing: 0;
  padding: 5px 0 0 9px;
  color: #f0f0f0;
`;

const AdjustRow = styled.div`
  height: 27px;
  flex: none;
  display: flex;
  align-items: center;
  gap: 8px;
  padding-left: ${(p) => p.$pad}px;
`;

const KindRow = styled.div`
  height: 28px;
  flex: none;
  display: flex;
  align-items: center;
  padding-left: 5px;
  border-bottom: 1px solid #3c3c3c;
`;

const BlendRow = styled.div`
  height: 28px;
  flex: none;
  display: flex;
  align-items: center;
  padding-left: 4px;
  border-bottom: 1px solid #3c3c3c;
`;

const FilterIcons = styled.div`
  display: flex;
  align-items: center;
  gap: 9px;
  margin-left: 11px;
`;

const SwitchTrack = styled.div`
  width: 10px;
  height: 18px;
  background: linear-gradient(#707070 50%, #444 50%);
  border: 1px solid #3d3d3d;
`;

const KindText = styled.span`
  margin-left: 3px;
`;

const RowLabel = styled.span`
  width: ${(p) => p.$w}px;
  flex: none;
  text-align: ${(p) => (p.$right ? "right" : "left")};
  margin-right: 5px;
  color: ${(p) => (p.$dim ? "#9a9a9a" : "#e6e6e6")};
`;

const LockIcons = styled.div`
  display: flex;
  align-items: center;
  width: 121px;
  flex: none;
  gap: 7px;
`;

const LayersBody = styled.div`
  flex: 1;
  min-height: 0;
  display: flex;
`;

const LayerList = styled.div`
  width: 329px;
  flex: none;
  overflow: hidden;
`;

const LayerRow = styled.div`
  height: ${(p) => p.$h || 39}px;
  flex: none;
  display: flex;
  border-bottom: 1px solid #3c3c3c;
  color: #f0f0f0;
`;

const EyeCell = styled.div`
  width: 30px;
  flex: none;
  display: flex;
  align-items: center;
  justify-content: center;
  padding-top: 2px;
  background: #535353;
  border-right: 1px solid #3c3c3c;
`;

const LayerMain = styled.div`
  flex: 1;
  display: flex;
  align-items: center;
  background: ${(p) => (p.$on ? "#6a7b92" : "#535353")};
`;

const LayerName = styled.span`
  padding-top: 4px;
`;

const TextThumb = styled.div`
  width: 52px;
  margin: 0 9px 0 0;
  padding: 2px 0 0 17px;
  height: 36px;
  flex: none;
  position: relative;
  display: flex;
  align-items: center;
  justify-content: center;
`;

const Brackets = styled.span`
  position: absolute;
  inset: 0 -1px 0 17px;
  background:
    linear-gradient(#fff, #fff) 0 0 / 7px 1px,
    linear-gradient(#fff, #fff) 0 0 / 1px 7px,
    linear-gradient(#fff, #fff) 100% 0 / 7px 1px,
    linear-gradient(#fff, #fff) 100% 0 / 1px 7px,
    linear-gradient(#fff, #fff) 0 100% / 7px 1px,
    linear-gradient(#fff, #fff) 0 100% / 1px 7px,
    linear-gradient(#fff, #fff) 100% 100% / 7px 1px,
    linear-gradient(#fff, #fff) 100% 100% / 1px 7px;
  background-repeat: no-repeat;
`;

const CheckerThumb = styled.div`
  width: 26px;
  height: 32px;
  margin: 0 10px 0 19px;
  flex: none;
  position: relative;
  border: 1px solid #111;
  background: repeating-conic-gradient(#c4c4c4 0 25%, #fff 0 50%) 0 0 / 10px 10px;
`;

const ShapeBadge = styled.span`
  position: absolute;
  right: -1px;
  bottom: -1px;
  width: 14px;
  height: 14px;
  background: #535353;
  border-left: 1px solid #111;
  border-top: 1px solid #111;
  display: flex;
  align-items: center;
  justify-content: center;
`;

const FolderTwist = styled.span`
  margin: 0 4px 0 4px;
  flex: none;
  display: flex;
`;

const FolderName = styled.span`
  margin-left: 12px;
  padding-top: 4px;
`;

const LayerScroll = styled.div`
  flex: 1;
  display: flex;
  flex-direction: column;
  align-items: center;
  background: #3f3f3f;
  border-left: 1px solid #383838;
`;

const LayersFoot = styled.div`
  height: 19px;
  flex: none;
  display: flex;
  align-items: center;
  justify-content: flex-end;
  gap: 12px;
  padding-right: 28px;
  border-top: 1px solid #3a3a3a;
  background: #535353;
`;

const FootCell = styled.span`
  width: 15px;
  flex: none;
  display: flex;
  justify-content: center;
  align-items: center;
`;

const navLines = [
  [318, 365, 275], [315, 355, 310], [402, 533, 310], [315, 358, 326], [402, 480, 326], [385, 418, 342],
  [315, 360, 358], [402, 480, 358], [315, 360, 375], [402, 557, 375], [385, 432, 392], [388, 435, 425],
  [388, 430, 483], [316, 402, 549], [385, 418, 566], [318, 385, 582], [403, 460, 582], [675, 745, 590],
  [655, 690, 607], [655, 675, 624], [655, 688, 640], [655, 705, 656], [655, 690, 673], [655, 672, 690],
  [385, 437, 634], [318, 375, 650], [402, 597, 650], [316, 352, 674], [385, 405, 690], [402, 425, 706],
  [403, 632, 716], [403, 585, 725], [315, 358, 716],
];

const navSpots = [
  [305, 274], [394, 309], [394, 325], [394, 358], [394, 375], [395, 406], [395, 441], [395, 497],
  [303, 547], [395, 582], [395, 650], [303, 674], [395, 706],
];

const NavThumb = () => (
  <NavDrawing viewBox="0 0 190 243">
    {navLines.map(([a, b, y], i) => (
      <rect key={i} x={(a - 246) / 3} y={(y - 113) / 3} width={(b - a) / 3} height="1" fill="#b2b2b2" />
    ))}
    {navSpots.map(([x, y], i) => (
      <circle key={i} cx={(x - 246) / 3} cy={(y - 113) / 3} r="1.200" fill="#8a8a8a" />
    ))}
  </NavDrawing>
);

const layers = [
  { kind: "raster", name: "BIRRETE" },
  { kind: "text", name: "Educación", on: true },
  { kind: "text", name: "1999 - 2001" },
  { kind: "text", name: "2001 - 2002" },
  { kind: "shape", name: "Ellipse 1" },
  { kind: "shape", name: "Ellipse" },
  { kind: "text", name: "Jardín de niños Tomás Mier García" },
  { kind: "text", name: "Instituto Cultural A.C." },
  { kind: "text", name: "Primaria" },
  { kind: "text", name: "2003 - 2006" },
];

const adjustRows = [
  { pad: 47, icons: ["sun", "levels", "curves", "exposure", "vibrance"] },
  { pad: 35, icons: ["hue", "balance", "bw", "photoFilter", "mixer", "lookup"] },
  { pad: 47, icons: ["invert", "posterize", "threshold", "selective", "gradientMap"] },
];

const Eye = () => (
  <EyeCell>
    <Icon name="eye" size={14} />
  </EyeCell>
);

const PanelRight = () => (
  <DockRight>
    <Collapse $h={11}>▸▸</Collapse>
    <Panel $h={292}>
      <TabStrip>
        <Tab $pad={6}>Histogram</Tab>
        <Tab $on $pad={7}>Navigator</Tab>
        <MenuLines />
      </TabStrip>
      <NavArea>
        <NavPreview>
          <NavThumb />
          <ViewBox />
        </NavPreview>
      </NavArea>
      <NavZoomRow>
        <NavPct>47.55%</NavPct>
        <Icon name="mountainS" size={12} />
        <SliderWrap>
          <Groove $w={210} />
          <SliderMark />
        </SliderWrap>
        <Icon name="mountainL" size={18} />
        <NavCorner><CornerGrip /></NavCorner>
      </NavZoomRow>
    </Panel>
    <Panel $h={121}>
      <TabStrip>
        <Tab $on $pad={7}>Adjustments</Tab>
        <MenuLines />
      </TabStrip>
      <AdjustTitle>Add an adjustment</AdjustTitle>
      {adjustRows.map((row) => (
        <AdjustRow key={row.pad + row.icons[0]} $pad={row.pad}>
          {row.icons.map((name) => (
            <Icon key={name} name={name} size={16} />
          ))}
        </AdjustRow>
      ))}
    </Panel>
    <Panel $h={539}>
      <TabStrip>
        <Tab $on>Layers</Tab>
        <Tab>Channels</Tab>
        <Tab>Paths</Tab>
        <MenuLines />
      </TabStrip>
      <KindRow>
        <Select w={88} h={18} off ghost>
          <Icon name="search" size={11} color="#aaa" />
          <KindText>Kind</KindText>
        </Select>
        <FilterIcons>
          <Icon name="fImage" size={15} color="#9a9a9a" />
          <Icon name="fAdjust" size={15} color="#9a9a9a" />
          <T $size={17} $color="#9a9a9a">T</T>
          <Icon name="fShape" size={15} color="#9a9a9a" />
          <Icon name="fSmart" size={15} color="#9a9a9a" />
          <SwitchTrack />
        </FilterIcons>
      </KindRow>
      <BlendRow>
        <Select w={129} h={18}>Normal</Select>
        <RowLabel $w={45} $right>Opacity:</RowLabel>
        <Combo $w={53}>
          <ComboText>100%</ComboText>
          <ComboArrow />
        </Combo>
      </BlendRow>
      <BlendRow>
        <RowLabel $w={29} $dim>Lock:</RowLabel>
        <LockIcons>
          <Icon name="checker" size={14} color="#999" />
          <Icon name="lockBrush" size={16} color="#999" />
          <Icon name="lockMove" size={14} color="#999" />
          <Icon name="lock" size={14} color="#999" />
        </LockIcons>
        <RowLabel $w={20} $right>Fill:</RowLabel>
        <Combo $w={53}>
          <ComboText $off>100%</ComboText>
          <ComboArrow />
        </Combo>
      </BlendRow>
      <LayersBody>
        <LayerList>
          <LayerRow $h={23}>
            <Eye />
            <LayerMain>
              <FolderTwist><Triangle $dir="down" $s={4} /></FolderTwist>
              <Icon name="folder" size={17} />
              <FolderName>Educación</FolderName>
            </LayerMain>
          </LayerRow>
          {layers.map((l) => (
            <LayerRow key={l.name}>
              <Eye />
              <LayerMain $on={l.on}>
                {l.kind === "text" ? (
                  <TextThumb>
                    {l.on && <Brackets />}
                    <T $size={23}>T</T>
                  </TextThumb>
                ) : (
                  <CheckerThumb>
                    {l.kind === "shape" && (
                      <ShapeBadge><Icon name="fShape" size={11} color="#ccc" /></ShapeBadge>
                    )}
                  </CheckerThumb>
                )}
                <LayerName>{l.name}</LayerName>
              </LayerMain>
            </LayerRow>
          ))}
          <LayerRow $h={5}>
            <EyeCell />
            <LayerMain />
          </LayerRow>
        </LayerList>
        <LayerScroll>
          <Triangle $dir="up" $m="6px 0 6px" />
          <Thumb $h={105} />
          <Grow />
          <Triangle $dir="down" $m="0 0 6px" />
        </LayerScroll>
      </LayersBody>
      <LayersFoot>
        <FootCell><Icon name="link" size={15} color="#aaa" /></FootCell>
        <FootCell><T $size={14} $color="#aaa">fx</T></FootCell>
        <FootCell><Icon name="mask" size={14} color="#aaa" /></FootCell>
        <FootCell><Icon name="fAdjust" size={14} color="#aaa" /></FootCell>
        <FootCell><Icon name="folder" size={14} color="#aaa" /></FootCell>
        <FootCell><Icon name="newLayer" size={13} color="#aaa" /></FootCell>
        <FootCell><Icon name="trash" size={14} color="#aaa" /></FootCell>
      </LayersFoot>
    </Panel>
  </DockRight>
);

const BottomEdge = styled.div`
  height: 4px;
  flex: none;
  background: #1f1f24;
`;

const App = () => (
  <>
    <GlobalStyle />
    <Frame>
      <TitleBar>
        <PsLogo>Ps</PsLogo>
        <Menu>
          {["File", "Edit", "Image", "Layer", "Type", "Select", "Filter", "3D", "View", "Window", "Help"].map((m) => (
            <span key={m}>{m}</span>
          ))}
        </Menu>
        <WinButtons>
          <WinButton $w={28}>_</WinButton>
          <WinButton $w={27}>❐</WinButton>
          <WinButton $w={46} $last>X</WinButton>
        </WinButtons>
      </TitleBar>
      <OptionsBar>
        <Grip />
        <Slot $w={56}>
          <T $size={24} $color="#8e8e8e">T</T>
          <MiniArrow />
        </Slot>
        <Sep />
        <Slot $w={38}><Icon name="orient" size={20} /></Slot>
        <Sep $r={6} />
        <Combo $w={146}>
          <ComboText $light>Helvetica 55 Roman R...</ComboText>
          <ComboArrow />
        </Combo>
        <Slot $w={11} />
        <Combo $w={77}>
          <ComboText $light $off>Regular</ComboText>
          <ComboArrow />
        </Combo>
        <Slot $w={41}>
          <SizeGlyph>
            <T $size={21}>T</T>
            <T $size={13}>T</T>
          </SizeGlyph>
        </Slot>
        <Combo $w={74}>
          <ComboText>11 pt</ComboText>
          <ComboArrow />
        </Combo>
        <Slot $w={38}><Icon name="aa" size={16} /></Slot>
        <Select w={92} h={19}>None</Select>
        <Sep $l={7} $r={7} />
        <Slot $w={25}><Icon name="alignL" size={20} /></Slot>
        <Slot $w={25} $on><Icon name="alignC" size={20} /></Slot>
        <Slot $w={25}><Icon name="alignR" size={20} /></Slot>
        <Sep $l={7} $r={5} />
        <Swatch />
        <Sep $l={5} />
        <Slot $w={40}><Icon name="warp" size={20} /></Slot>
        <Sep />
        <Slot $w={39}><Icon name="panels" size={18} /></Slot>
        <Sep />
        <Slot $w={37}><Icon name="cancel" size={18} /></Slot>
        <Slot $w={35}><Icon name="check" size={17} /></Slot>
        <Sep />
        <Slot $w={37}><ThreeD>3D</ThreeD></Slot>
        <Grow />
        <Select w={120} h={17} off ghost>Photography</Select>
      </OptionsBar>
      <Workspace>
        <ToolColumn />
        <Center>
          <DocTabs>
            <DocTab>
              CV - Elizabeth Agüero.psd @ 47.6% (Educación, RGB/8) *
              <DocClose>×</DocClose>
            </DocTab>
          </DocTabs>
          <CanvasRow>
            <DocPage />
            <ScrollV>
              <Triangle $dir="up" $m="5px 0 0" />
              <Thumb $h={198} $mt={261} />
              <Grow />
              <Triangle $dir="down" $m="0 0 5px" />
            </ScrollV>
          </CanvasRow>
          <StatusBar>
            <StatusZoom>47.55%</StatusZoom>
            <StatusDoc>
              Doc: 24.0M/95.4M
              <Triangle $dir="right" $s={4} $m="0 0 0 auto" $color="#eee" />
              <Slot $w={6} />
            </StatusDoc>
            <HTrack>
              <Triangle $dir="left" />
              <HThumb $w={351} $h={14} $ml={317} />
              <Grow />
              <Triangle $dir="right" />
            </HTrack>
            <StatusEnd />
          </StatusBar>
          <Timeline>
            <TabStrip>
              <Tab $on>Timeline</Tab>
              <MenuLines />
            </TabStrip>
            <TransportRow>
              <Transport $w={30}><Icon name="first" size={12} color="#8a8a8a" /></Transport>
              <Transport $w={31}><Icon name="prev" size={12} color="#8a8a8a" /></Transport>
              <Transport $w={31}><Icon name="play" size={13} color="#8a8a8a" /></Transport>
              <Transport $w={31}><Icon name="next" size={12} color="#8a8a8a" /></Transport>
              <Transport $w={28}><Icon name="mute" size={12} color="#8a8a8a" /></Transport>
              <Transport $w={38} $edge><Icon name="gear" size={12} color="#8a8a8a" /></Transport>
              <Transport $w={36}><Icon name="scissors" size={17} color="#8a8a8a" /></Transport>
              <Transport $w={35} $edge><Icon name="transition" size={14} color="#8a8a8a" /></Transport>
              <Transport $w={973} $edge />
            </TransportRow>
            <TimelineBody>
              <PlainButton $w={137}>Create Video Timeline</PlainButton>
              <PlainButton $w={17}><Triangle $dir="down" $s={4} /></PlainButton>
            </TimelineBody>
            <TimelineFoot>
              <FootLeft>
                <Icon name="frames" size={15} color="#8a8a8a" />
                <Icon name="share" size={14} color="#8a8a8a" />
              </FootLeft>
              <FootZoom>
                <Icon name="mountainS" size={12} color="#8a8a8a" />
                <Groove $w={88} />
                <Icon name="mountainL" size={16} color="#8a8a8a" />
              </FootZoom>
            </TimelineFoot>
          </Timeline>
        </Center>
        <PanelMiddle />
        <PanelRight />
      </Workspace>
      <BottomEdge />
    </Frame>
  </>
);

export default App;
